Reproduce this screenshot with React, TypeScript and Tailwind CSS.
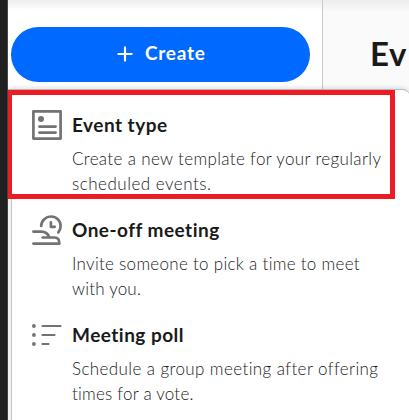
import type { ReactNode } from "react";

function TemplateIcon() {
  return (
    <svg width="30" height="30" viewBox="0 0 30 30" fill="none" stroke="#737373" strokeWidth="2.7" strokeLinecap="round">
      <rect x="1.4" y="1.4" width="27.2" height="27.2" strokeLinejoin="round" />
      <circle cx="9" cy="9" r="3" fill="#737373" stroke="none" />
      <path d="M7.4 16.6H23.6M7.4 22.6H23.6" />
    </svg>
  );
}

function OneOffIcon() {
  return (
    <svg width="30" height="30" viewBox="0 0 30 30" fill="none" stroke="#737373" strokeWidth="2.7" strokeLinecap="round" strokeLinejoin="round">
      <path d="M9.2 11C9.4 5.5 13.7 1.5 19 1.5C24.4 1.5 28.6 5.8 28.6 11C28.6 13.5 27.8 15.7 26.3 17.4" />
      <path d="M18.9 7.4V11.8H22.7" />
      <path d="M1.4 16.6H9.5C13.3 16.6 15.6 18.2 17.4 22.2M10.6 22.5H22.5C25.5 22.5 27.4 24.8 27.4 28.6H1.4" />
    </svg>
  );
}

function PollIcon() {
  return (
    <svg width="30" height="30" viewBox="0 0 30 30" fill="#737373">
      <circle cx="1.9" cy="6" r="1.9" />
      <circle cx="1.9" cy="15" r="1.9" />
      <circle cx="1.9" cy="24" r="1.9" />
      <path d="M10.4 6H28.6M10.4 15H22.6M10.4 24H16.6" stroke="#737373" strokeWidth="2" strokeLinecap="round" />
    </svg>
  );
}

interface ItemProps {
  icon: ReactNode;
  title: string;
  first: string;
  firstClass: string;
  second: string;
  secondClass: string;
}

function MenuItem({ icon, title, first, firstClass, second, secondClass }: ItemProps) {
  return (
    <div className="flex h-[105px] gap-[9px] pl-[21px] pt-[20px] whitespace-nowrap">
      <div className="h-[30px] w-[30px] shrink-0">{icon}</div>
      <div className="pt-[3px]">
        <h2 className="pl-px text-[19px] leading-6 font-bold tracking-[0.48px] text-[#1a1a1a]">{title}</h2>
        <p className="pl-px pt-[9px] text-[17px] leading-[25px] font-light text-[#1a1a1a]">
          <span className={`block ${firstClass}`}>{first}</span>
          <span className={`block ${secondClass}`}>{second}</span>
        </p>
      </div>
    </div>
  );
}

export default function App() {
  return (
    <div className="relative flex h-[420px] w-[409px] overflow-hidden bg-white font-[Lato,sans-serif]">
      <div className="w-2 shrink-0 border-r border-[#474747] bg-[#202020]" />
      <div className="w-[315px] shrink-0 border-r border-[#c9c9c9] bg-gradient-to-b from-[#ededed] to-white to-[10px] pl-[3px] pt-[27px]">
        <button className="flex h-[55px] w-[299px] items-center rounded-full bg-[#0069ff] pl-[106px] text-white">
          <svg width="16" height="16" viewBox="0 0 16 16" stroke="currentColor" strokeWidth="2.2" strokeLinecap="round" className="-mt-px">
            <path d="M8 1.4V14.6M1.4 8H14.6" />
          </svg>
          <span className="-mt-[3px] ml-3 text-[19px] leading-6 font-bold tracking-[0.75px]">Create</span>
        </button>
      </div>
      <div className="flex-1 bg-[#fafafa] bg-gradient-to-b from-[#ededed] to-[#fafafa] to-[12px] pl-[47px] pt-[33px]">
        <h1 className="text-[33px] leading-10 font-bold tracking-[0.5px] text-[#1a1a1a]">Ev</h1>
      </div>
      <div className="absolute left-2 top-[89px] h-[340px] w-[402px] rounded-tr-lg border-t border-[#b9b9b9] bg-white pl-[3px] shadow-[0_-1px_5px_rgba(0,0,0,0.14)]">
        <div className="absolute left-0 top-[109px] h-[232px] w-1 border-r border-[#c4c7c6] bg-[#eef1f0]" />
        <MenuItem icon={<TemplateIcon />} title="Event type" first="Create a new template for your regularly" firstClass="tracking-[0.35px]" second="scheduled events." secondClass="tracking-[0.5px]" />
        <MenuItem icon={<OneOffIcon />} title="One-off meeting" first="Invite someone to pick a time to meet" firstClass="tracking-[0.29px]" second="with you." secondClass="tracking-[0.2px]" />
        <MenuItem icon={<PollIcon />} title="Meeting poll" first="Schedule a group meeting after offering" firstClass="tracking-[0.4px]" second="times for a vote." secondClass="tracking-[0.22px]" />
      </div>
      <div className="absolute left-2 top-[90px] h-[109px] w-[387px] border-[5px] border-l-4 border-[#ed1c24]" />
    </div>
  );
}
